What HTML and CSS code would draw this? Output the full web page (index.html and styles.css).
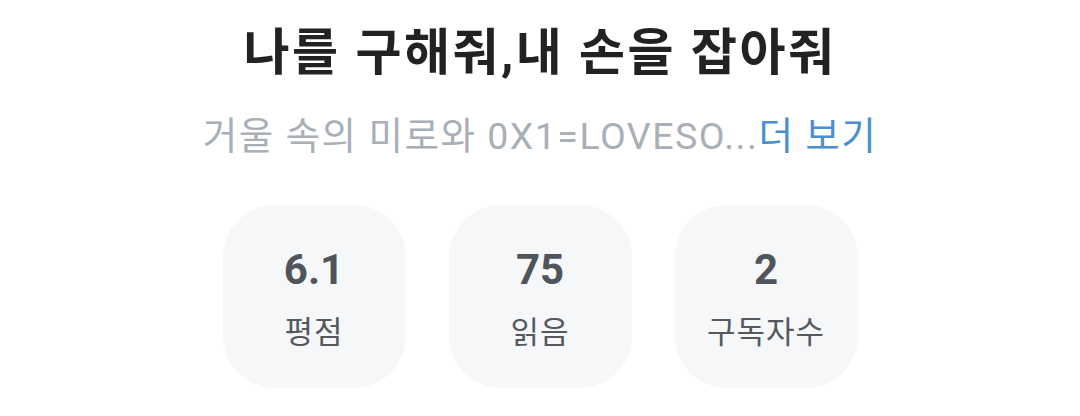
FILE: index.html
```html
<!DOCTYPE html>
<html>
<head>
    <title>작품 정보</title>
    <link rel="stylesheet" href="styles.css">
</head>
<body>
    <div class="info">
        <h1 class="title">나를 구해줘,내 손을 잡아줘</h1>
        <p class="summary">거울 속의 미로와 0X1=LOVESO...<span class="more">더 보기</span></p>

        <div class="stats">
            <div class="stat">
                <div class="stat-value">6.1</div>
                <div class="stat-label">평점</div>
            </div>
            <div class="stat">
                <div class="stat-value">75</div>
                <div class="stat-label">읽음</div>
            </div>
            <div class="stat">
                <div class="stat-value">2</div>
                <div class="stat-label">구독자수</div>
            </div>
        </div>
    </div>
</body>
</html>
```

FILE: styles.css
```css
body {
    font-family: 'Roboto', 'Noto Sans CJK KR', sans-serif;
    margin: 0;
    padding: 0;
    background-color: #ffffff;
}
.info {
    display: flex;
    flex-direction: column;
    align-items: center;
    padding-top: 23px;
}
.title {
    margin: 0;
    font-size: 50px;
    line-height: 60px;
    font-weight: 700;
    letter-spacing: 2.5px;
    color: #222222;
}
.summary {
    margin: 33px 0 0;
    font-size: 37.5px;
    line-height: 40px;
    letter-spacing: 1.5px;
    color: #a9afb7;
}
.more {
    color: #4a8fd0;
}
.stats {
    display: flex;
    gap: 43px;
    margin-top: 49px;
}
.stat {
    width: 183px;
    height: 183px;
    box-sizing: border-box;
    padding-top: 41px;
    border-radius: 52px;
    background-color: #f6f7f9;
    display: flex;
    flex-direction: column;
    align-items: center;
}
.stat-value {
    font-size: 42px;
    line-height: 48px;
    font-weight: 700;
    color: #50555c;
}
.stat-label {
    margin-top: 20px;
    font-size: 31px;
    line-height: 38px;
    letter-spacing: 1px;
    color: #55595f;
}
```
